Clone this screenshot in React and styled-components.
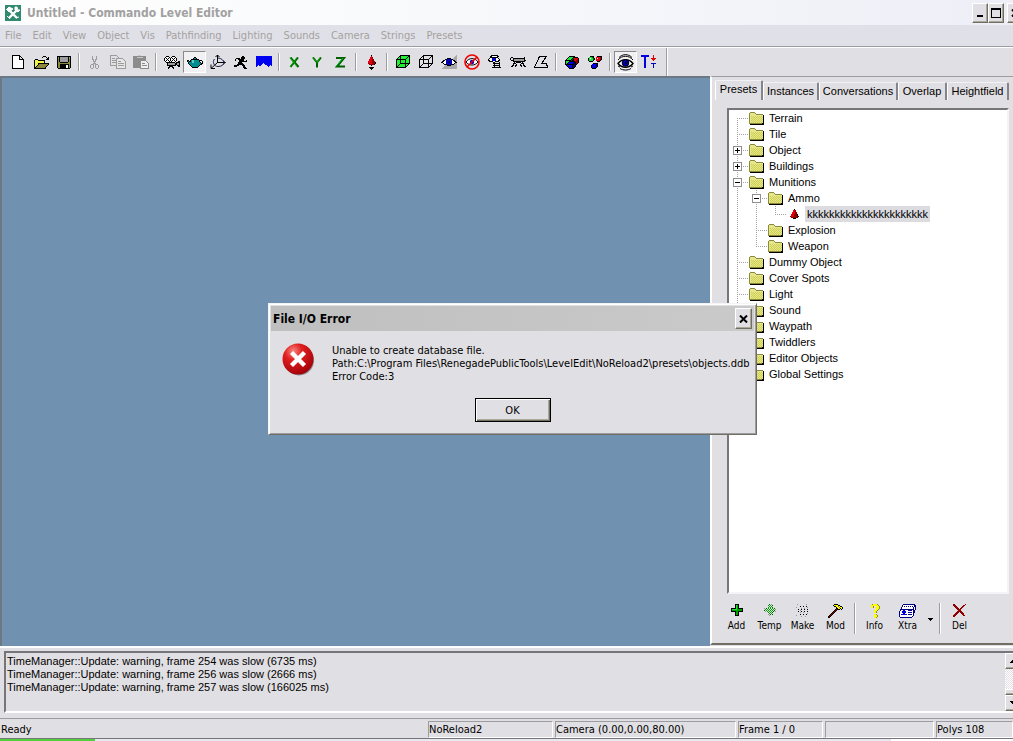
import React, { useState } from 'react';
import styled, { createGlobalStyle, css } from 'styled-components';

const GlobalStyle = createGlobalStyle`
    * { box-sizing : border-box; }
    body {
        margin : 0;
        background : #e0dfe3;
        overflow : hidden;
    }
    button {
        margin : 0;
        padding : 0;
        border : 0;
        background : none;
        color : inherit;
        font : inherit;
    }
    ul { list-style : none; margin : 0; padding : 0; }
    svg { display : block; flex : none; }
`

const ui = css`
    font-family : "DejaVu Sans Condensed", "DejaVu Sans", sans-serif;
    font-size : 11px;
`
const sans = css`
    font-family : "Liberation Sans", sans-serif;
    font-size : 11px;
`
const raised = css`
    border : 1px solid;
    border-color : #fff #716f64 #716f64 #fff;
    box-shadow : inset -1px -1px 0 #aca899;
`

const Window = styled.div`
    ${ui}
    display : flex;
    flex-direction : column;
    height : 100vh;
    color : #000;
    overflow : hidden;
`
const TitleBar = styled.header`
    display : flex;
    align-items : center;
    flex : none;
    height : 25px;
    padding-left : 5px;
    gap : 6px;
    overflow : hidden;
    background : linear-gradient(to right, #fefefe, #f8f9fb 45%, #eeeef7);
    h1 {
        flex : 1;
        margin : 0;
        font-size : 12px;
        font-weight : bold;
        color : #a2a1a1;
        white-space : nowrap;
    }
`
const Controls = styled.div`
    display : flex;
    flex : none;
    margin-right : -10px;
    button {
        ${raised}
        display : grid;
        place-items : center;
        width : 16px;
        height : 20px;
        background : #e0dfe3;
    }
    button:last-child { margin-left : 3px; }
`
const MenuBar = styled.nav`
    display : flex;
    align-items : center;
    flex : none;
    height : 22px;
    background : #e0e0e9;
    border-bottom : 1px solid #9d9da1;
    color : #a5a29d;
    button {
        padding : 0 5px 0 6px;
    }
    button:first-child { padding-left : 5px; }
`
const Toolbar = styled.div`
    display : flex;
    align-items : center;
    flex : none;
    height : 29px;
    padding-left : 6px;
    border-top : 1px solid #fff;
`
const ToolButton = styled.button`
    display : grid;
    place-items : center;
    width : 23px;
    height : 22px;
    ${p => p.$pressed && css`
        border : 1px solid;
        border-color : #8a8a8a #fff #fff #8a8a8a;
        background : #f1f1f3;
    `}
`
const Divider = styled.span`
    width : 2px;
    height : ${p => p.$tall ? '28px' : '18px'};
    margin : 0 3px 0 ${p => p.$tall ? '6px' : '3px'};
    border-left : 1px solid #9d9da1;
    border-right : 1px solid #fff;
`
const Workspace = styled.main`
    display : flex;
    flex : 1;
    min-height : 0;
`
const Viewport = styled.section`
    flex : 1;
    background : #7092b0;
    border : solid #6c7884;
    border-width : 2px 0 0 2px;
`
const Dock = styled.aside`
    ${sans}
    display : flex;
    flex-direction : column;
    width : 303px;
    margin-bottom : 1px;
    border-left : 2px solid #fff;
    border-top : 1px solid #9d9da1;
    padding : 3px 0 0 3px;
    border-bottom : 2px solid #716f64;
`
const Tabs = styled.div`
    display : flex;
    height : 20px;
    align-items : flex-end;
    padding-right : 4px;
`
const Tab = styled.button`
    flex : 0 0 ${p => p.$w}px;
    height : ${p => p.$active ? '20px' : '18px'};
    padding-bottom : ${p => p.$active ? '3px' : '1px'};
    border-top : 1px solid #f2f2f4;
    border-left : 1px solid #fff;
    border-right : 2px solid #85848a;
    border-radius : 2px 2px 0 0;
    white-space : nowrap;
`
const Tree = styled.ul`
    flex : 1;
    min-height : 0;
    margin : 8px 4px 0 12px;
    background : #fff;
    border : 2px solid;
    border-color : #77757a #f4f4f6 #f4f4f6 #77757a;
    overflow : hidden;
`
const Row = styled.div`
    display : flex;
    align-items : center;
    height : 16px;
`
const line = 'repeating-linear-gradient(#a5a5a5 0 1px, transparent 1px 2px)';
const dash = 'repeating-linear-gradient(to right, #a5a5a5 0 1px, transparent 1px 2px)';
const Guide = styled.span`
    display : flex;
    align-items : center;
    flex : none;
    width : 19px;
    height : 16px;
    padding-left : 4px;
    background-repeat : no-repeat;
    ${p => p.$kind === 'through' && css`
        background-image : ${line};
        background-size : 1px 16px;
        background-position : 8px 0;
    `}
    ${p => ['first', 'mid', 'last'].includes(p.$kind) && css`
        background-image : ${line}, ${dash};
        background-size : 1px ${p.$kind === 'mid' ? 16 : 8}px, 11px 1px;
        background-position : 8px ${p.$kind === 'first' ? 8 : 0}px, 8px 8px;
    `}
`
const Expander = styled.button`
    display : grid;
    place-items : center;
    width : 9px;
    height : 9px;
    background : #fff;
    border : 1px solid #8f8f8f;
`
const Label = styled.span`
    margin-left : 2px;
    padding : 0 2px;
    line-height : 16px;
    white-space : nowrap;
    background : ${p => p.$selected ? '#dcdce0' : 'none'};
`
const PresetBar = styled.div`
    ${ui}
    font-size : 10px;
    display : flex;
    align-items : center;
    flex : none;
    height : 49px;
    padding : 0 0 1px 5px;
`
const PresetButton = styled.button`
    display : flex;
    flex-direction : column;
    align-items : center;
    width : 33px;
    height : 28px;
    line-height : 12px;
    justify-content : space-between;
`
const DropButton = styled.button`
    display : grid;
    place-items : center;
    width : 13px;
    height : 30px;
    padding-top : 2px;
`
const PresetDivider = styled(Divider)`
    height : 31px;
    margin : 0 2px;
`
const Output = styled.section`
    display : flex;
    flex : none;
    height : 72px;
    padding : 3px 0 5px 4px;
    border-top : 2px solid #fff;
`
const Log = styled.textarea`
    ${sans}
    flex : 1;
    min-width : 0;
    margin : 0;
    padding : 2px 1px;
    border : 2px solid;
    border-color : #77757a #e0dfe3 #fff #77757a;
    border-right : 0;
    outline : 0;
    resize : none;
    overflow : hidden;
    background : #e0dfe3;
    color : #000;
    line-height : 13px;
    white-space : pre;
`
const ScrollBar = styled.div`
    display : flex;
    flex-direction : column;
    justify-content : space-between;
    width : 8px;
    overflow : hidden;
    border-top : 2px solid #77757a;
    border-bottom : 2px solid #fff;
    background : repeating-conic-gradient(#fff 0 25%, #e0dfe3 0 50%) 0 0 / 2px 2px;
    button {
        ${raised}
        display : grid;
        place-items : center;
        width : 16px;
        height : 16px;
        background : #e0dfe3;
    }
    button:nth-child(2) { height : 6px; margin-top : auto; }
`
const StatusBar = styled.footer`
    display : flex;
    align-items : center;
    flex : none;
    height : 20px;
    padding-top : 1px;
    gap : 2px;
    background : #e0dfe3;
    border-top : 1px solid #9d9da1;
`
const Pane = styled.span`
    flex : ${p => p.$w ? `0 0 ${p.$w}px` : '1'};
    height : 17px;
    line-height : 15px;
    white-space : nowrap;
    overflow : hidden;
    border : 1px solid transparent;
    ${p => p.$w && css`
        border-color : #9d9da1 #fff #fff #9d9da1;
    `}
`
const Overlay = styled.div`
    position : fixed;
    inset : 0;
    display : flex;
    align-items : center;
    justify-content : center;
    padding : 0 0 3px 12px;
`
const Dialog = styled.section`
    ${ui}
    width : 489px;
    background : #e0dfe3;
    border : 1px solid;
    border-color : #f4f4f6 #716f64 #716f64 #f4f4f6;
    box-shadow : inset 1px 1px 0 #fff, inset -1px -1px 0 #9d9da1;
    padding : 2px;
`
const DialogTitle = styled.div`
    display : flex;
    align-items : center;
    justify-content : space-between;
    height : 25px;
    padding : 0 2px;
    background : linear-gradient(to right, #bfbfbf, #cacaca);
    h2 {
        margin : 0;
        font-size : 12px;
        font-weight : bold;
    }
    button {
        ${raised}
        display : grid;
        place-items : center;
        width : 17px;
        height : 21px;
        background : #e0dfe3;
    }
`
const DialogBody = styled.div`
    display : flex;
    gap : 18px;
    padding : 12px 8px 0 11px;
    p {
        margin : 0;
        padding-top : 1px;
        line-height : 13px;
        white-space : pre;
    }
`
const DialogActions = styled.div`
    display : flex;
    justify-content : center;
    padding : 15px 0 10px;
    button {
        width : 76px;
        height : 24px;
        border : 1px solid #000;
        box-shadow : inset 1px 1px 0 #fff, inset -1px -1px 0 #716f64, inset -2px -2px 0 #aca899;
    }
`
const Taskbar = styled.div`
    display : flex;
    flex : none;
    height : 3px;
    background : linear-gradient(to right, #e8e8f0 88%, #fff 88%);
    border-top : 1px solid #77757a;
    span {
        width : 95px;
        background : #52cf3c;
    }
`

const Svg = ({ w = 16, h = 16, children, ...rest }) => (
    <svg width={w} height={h} viewBox={`0 0 ${w} ${h}`} fill="none" stroke="#000" shapeRendering="crispEdges" aria-hidden="true" {...rest}>{children}</svg>
)

// Small bitmaps: one character for each pixel, "." is empty
const colors = {
    k: '#000', w: '#fff', y: '#ffff00', o: '#84824a', d: '#8c8a3a', g: '#00a000', G: '#20e040', D: '#006000',
    r: '#e00010', R: '#900000', b: '#0000e0', n: '#000080', s: '#9c9c9c', t: '#008c8c', c: '#5cd0d0', f: '#e6e68c', e: '#cfcf52'
};
const Bitmap = ({ rows }) => (
    <Svg w={rows[0].length} h={rows.length} stroke="none">
        {rows.map((row, y) => [...row].map((c, x) => c !== '.' &&
            <rect key={`${x}-${y}`} x={x} y={y} width="1" height="1" fill={colors[c]} />
        ))}
    </Svg>
)

const bitmaps = {
    open: [
        '..........kkk...',
        '.........k...k.k',
        '..............kk',
        '..kkk........kkk',
        '.kfyfkkkkkkk....',
        '.kyfyfyfyfyk....',
        '.kfyfyfyfyfk....',
        '.kyfykkkkkkkkkkk',
        '.kfyfkdddddddddk',
        '.kyfkdddddddddk.',
        '.kfkdddddddddk..',
        '.kkdddddddddk...',
        '.kkkkkkkkkkkk...',
    ],
    save: [
        'kkkkkkkkkkkkkk',
        'kdkssssssssksk',
        'kdkssssssssksk',
        'kdksssssssskdk',
        'kdksssssssskdk',
        'kdksssssssskdk',
        'kddkkkkkkkkddk',
        'kddddddddddddk',
        'kddkkkkkkkkkdk',
        'kddkkkkkkwwkdk',
        'kddkkkkkkwwkdk',
        'kddkkkkkkwwkdk',
        '.kkkkkkkkkkkk.',
    ],
    cut: [
        '...s...s...',
        '...s...s...',
        '...s...s...',
        '...ss.ss...',
        '....s.s....',
        '....sss....',
        '.....s.....',
        '....sss....',
        '..sss.sss..',
        '.s..s.s..s.',
        '.s..s.s..s.',
        '.s..s.s..s.',
        '..ss...ss..',
    ],
    camera: [
        '..kkk...kkk.....',
        '.kwwwk.kwwwk....',
        'kwkwkwkwkwkwk...',
        'kwwkwwkwwkwwk...',
        'kwkwkwkwkwkwk...',
        '.kwwwk.kwwwk..kk',
        '..kkkkkkkkk.kkkk',
        '...kssssssskkssk',
        '...kssssssskkssk',
        '...kkkkkkkkk.kkk',
        '.....kkkk.....kk',
        '....kk..kk......',
        '....k....k......',
    ],
    teapot: [
        '.......kk.......',
        '......kttk......',
        '....kkkkkkkk....',
        'kk.ktcctttttkkk.',
        'ktkktcctttttk..k',
        '.ktttccttttttk.k',
        '.kttttttttttttkk',
        '..kttttttttttkk.',
        '...kttttttttk...',
        '....kttttttk....',
        '.....kkkkkk.....',
    ],
    runner: [
        '........kk...',
        '.......kkkk..',
        '..kkkk.kkkk..',
        '.k..kkkkkk...',
        '.k...kkkkk..k',
        '.....kkkkkkkk',
        '....kkkk.....',
        '....kkkkk....',
        '...kkkkkkk...',
        'kkkkk...kkk..',
        'kkk......kk..',
        '.........kkk.',
        '..........kkk',
    ],
    spindle: [
        '....k....',
        '....r....',
        '...rrR...',
        '...rrR...',
        '..rrrRR..',
        '..rrrRR..',
        '.rrrrRRR.',
        '.rrrrRRRk',
        '.RrrrRRRk',
        '..RRRRRk.',
        '....k....',
        '.........',
        '..kkkkk..',
        '...kkk...',
        '....k....',
    ],
    walker: [
        '.kk...........k.',
        'k..kkkkkkkkkkkk.',
        'k..kssssssssssk.',
        '.kkksssssssssskk',
        '...kkkkkkkkkkkk.',
        '....k.kkkkk.k...',
        '...kkk.....kkk..',
        '...k..k...k..k..',
        '..kk.kk...kk.kk.',
        '.kk..k.....k..kk',
    ],
    solids: [
        '....kkkkkk....',
        '...kGGGGkkkkk.',
        '..kGGGGkDrrrrk',
        '.kGGGGkDkrrrRk',
        'kkkkkkDkkrrRRk',
        'kGGGkkkkkkRRRk',
        'kGGkbbbbbkkRRk',
        'kGkbbbbbknkRk.',
        'kkkkkkkkknkk..',
        '.kbbbbbknnk...',
        '..kbbbbknnk...',
        '...kbbbknk....',
        '....kkkkk.....',
    ],
    group: [
        '..kkkk...kkkkk',
        '.GGGDk..rrrrRk',
        'kGwGGDk.rwrrRk',
        'kGGGGDk.rrrrRk',
        'kGGGGk..rrrRk.',
        '.kkkk....kkk..',
        '..............',
        '.....kkkkk....',
        '....bbbbnk....',
        '...kbbbbnk....',
        '...kbbbbnk....',
        '...kbbbnk.....',
        '....kkkk......',
    ],
    folder: [
        '.ddddd.........',
        'dfffffd........',
        'dffffffddddddd.',
        'dfffffffffffffk',
        'dfefefefefefefk',
        'dffefefefefefek',
        'dfefefefefefefk',
        'dffefefefefefek',
        'dfefefefefefefk',
        'dffefefefefefek',
        'dfefefefefefefk',
        'dddddddddddddkk',
        '.kkkkkkkkkkkkkk',
    ],
    drop: [
        '....k....',
        '...rrR...',
        '...rrR...',
        '..rrrRR..',
        '..rrrRR..',
        '.rrrRRRk.',
        '.rrrRRRk.',
        'RrrRRRRRk',
        '.RRRRRRk.',
        '...kkk...',
    ],
    add: [
        '....kkkk....',
        '....kGgk....',
        '....kGgk....',
        '....kGgk....',
        'kkkkkGgkkkkk',
        'kGGGGGgggggk',
        'kggggggggggk',
        'kkkkkggkkkkk',
        '....kggk....',
        '....kggk....',
        '....kggk....',
        '....kkkk....',
    ],
    temp: [
        '.....D.s....',
        '....g.g.D...',
        '.....g.g....',
        '....g.g.D...',
        's.D.g.g.g.D.',
        '.g.g.g.g.g.s',
        'D.g.g.g.g.D.',
        '.s.g.g.g.D.s',
        '....g.g.D...',
        '.....g.g....',
        '....s.D.D...',
        '.....s......',
    ],
    make: [
        '.s........s..',
        '.............',
        '....k..k..k..',
        's..........s.',
        '.....s..s....',
        '..k..k..k..k.',
        '....s........',
        '..k..k..k..k.',
        '....s..s.....',
        '...........s.',
        '....k..k..k..',
        's............',
        '.....s...s...',
    ],
    mod: [
        '......kkkk.....',
        '.....kyyyykk...',
        '......kkyydykk.',
        '........kyydyyk',
        '........kkyykyk',
        '.......kRkkk.k.',
        '......kRk......',
        '.....kRk.......',
        '....kRk........',
        '...kRk.........',
        '..kRk..........',
        '.kRk...........',
        'kRk............',
        'kk.............',
    ],
    info: [
        '..dyyyyd..',
        '.yyyyyyyd.',
        '.yyd..yyyd',
        '.yyd..yyyd',
        '......yyyd',
        '.....yyyd.',
        '....yyyd..',
        '....yyd...',
        '....yyd...',
        '..........',
        '....yyd...',
        '....yyyd..',
        '....yyyd..',
        '....yyd...',
    ],
    xtra: [
        '....nnnnnnnnnnnn.',
        '...nwwwwwwwwwwwnn',
        '...nwnwnwnwnwnwnn',
        '..nwwwwwwwwwwwnwn',
        '..nwwwwwwwwwwwnwn',
        '.nnnnnnnnnnnnnnwn',
        '.nwwbbwwwnnnnwnn.',
        'nwwbbbbwwwwwwwnn.',
        'nwwbbbbwwnnnnwnn.',
        'nwwwbbwwwwwwwwn..',
        'nwbbbbbbwnnnnwn..',
        'nwwwwwwwwwwwwwn..',
        'nwwwwwwwwwwwwn...',
        '.nnnnnnnnnnnn....',
    ],
    del: [
        'RR..........R',
        'RRR.......RR.',
        '.RRR.....RR..',
        '..RRR...RR...',
        '...RRR.RR....',
        '....RRRR.....',
        '.....RRR.....',
        '....RRRRR....',
        '...RRR.RRR...',
        '..RRR...RRR..',
        '.RRR.....RR..',
        'RRR.......RR.',
        'RR...........',
    ],
};

const icons = {
    new: <Svg w={12} h={14}><path d="M.5.5h7l4 4v9H.5zM7.5.5v4h4" fill="#fff" /></Svg>,
    copy: <Svg stroke="#9c9c9c"><path d="M.5 1.5h6l3 3v7h-9zM2 4.5h3M2 6.5h5M2 8.5h5" /><path d="M6.5 4.5h6l3 3v7h-9z" fill="#e6e6e9" /><path d="M8 7.5h3M8 9.5h6M8 11.5h6" /></Svg>,
    paste: <Svg stroke="#8c8c8c"><path d="M.5 2.5h12v11H.5z" fill="#8c8c8c" /><path d="M3.5 3.5h6M5 1.5h3" stroke="#c8c8c8" /><path d="M7.5 6.5h5l3 3v5h-8z" fill="#eee" /><path d="M9 9.5h3M9 11.5h5" /></Svg>,
    axes: <Svg shapeRendering="auto"><path d="M7.5 9V1M5.5 3l2-2 2 2M7.5 8.5h8M13 6.5l2 2-2 2M7.5 8.5l-6.5 6M1 10.5v4h4" /><path d="M4.5 5C2 8 4 12.5 8 12.5s6-2 6-4S11 4 8 4" stroke="#222250" /></Svg>,
    terrain: <Svg stroke="none"><path d="M0 2h16v11l-2-2-2 2-2-2H9l-2-2-3 3-2-1-2 2z" fill="#0000f0" /></Svg>,
    x: <Svg w={11} h={11} shapeRendering="auto"><path d="M1.5.5l8 9.5M9 .5L1.5 10" stroke="#006000" strokeWidth="2" /><path d="M1 .5l7 9M8 .5L1 10" stroke="#00b000" /></Svg>,
    y: <Svg w={11} h={11} shapeRendering="auto"><path d="M1 .5l4 5 4-5M5 5v5.5" stroke="#006000" strokeWidth="2" /><path d="M1 .5l4 5 3-5" stroke="#00b000" /></Svg>,
    z: <Svg w={11} h={11} shapeRendering="auto"><path d="M1 1h8L2 9.5h8" stroke="#006000" strokeWidth="2" /><path d="M8 1L1 9.5" stroke="#00c020" /></Svg>,
    solid: <Svg><path d="M1.5 5.5l4-4h9v8l-4 4h-9z" fill="#20f030" /><path d="M1.5 5.5h9v8M10.5 5.5l4-4M5.5 1.5v8h9M5.5 9.5l-4 4" /></Svg>,
    wire: <Svg><path d="M1.5 5.5l4-4h9v8l-4 4h-9zM1.5 5.5h9v8M10.5 5.5l4-4M5.5 1.5v8h9M5.5 9.5l-4 4" /></Svg>,
    visEye: <Svg><path d="M16 1v14H0z" fill="#a8a8a8" stroke="none" /><path d="M1 8.5c4-5 10-5 14 0-4 4-10 4-14 0z" fill="#fff" /><circle cx="8" cy="8" r="2.5" fill="#0000c0" stroke="#0000c0" /><path d="M8 7h1v2H8z" stroke="none" fill="#000" /></Svg>,
    noEye: <Svg shapeRendering="auto"><path d="M2 8c3-4.5 9-4.5 12 0-3 4-9 4-12 0z" fill="#fff" /><circle cx="8" cy="8" r="2.2" fill="#0000c0" stroke="none" /><g stroke="#f00000" strokeWidth="1.6"><circle cx="8" cy="8" r="7" /><path d="M13 3L3 13" /></g></Svg>,
    ladder: <Svg><path d="M1 6c3-4 9-4 12 0-3 3-9 3-12 0zM3 3c3-2.5 6-2.5 9 0" fill="#fff" /><circle cx="7" cy="5.5" r="2" fill="#0000c0" stroke="none" /><path d="M6 9.5h7M6 11.5h7M5 13.5h9M7.5 8v6M12.5 8v6" /></Svg>,
    outline: <Svg><path d="M5.5 2.5h8l-5 7h5l1 4H1.5l5-11z" /></Svg>,
    bigEye: <Svg w={17} h={17} shapeRendering="auto"><path d="M1 6C5 1 12 1 16 6M2 3.5C6-.3 11-.3 15 3.5" /><path d="M1 9.5c4-5 11-5 15 0-4 5-11 5-15 0z" fill="#fff" strokeWidth="1.4" /><circle cx="8.5" cy="9" r="3.3" fill="#0000c0" /><path d="M8 8h2v2H8z" stroke="none" fill="#000" /><path d="M3 14.5c3 2 8 2 11 0M1 12l2 1M16 12l-2 1" /></Svg>,
    typeIcon: <Svg><path d="M0 1h8v2H5v11H3V3H0z" fill="#0000e0" stroke="none" /><path d="M12 1h1v3h2l-2.5 3L10 4h2z" fill="#e00000" stroke="none" /><path d="M10 9h5v1h-2v4h-1v-4h-2z" fill="#0000c0" stroke="none" /></Svg>,
};
const Icon = ({ name }) => icons[name] || <Bitmap rows={bitmaps[name]} />

const toolGroups = [
    [['new', 'New'], ['open', 'Open'], ['save', 'Save']],
    [['cut', 'Cut'], ['copy', 'Copy'], ['paste', 'Paste']],
    [['camera', 'Camera mode'], ['teapot', 'Object mode', true], ['axes', 'Orbit mode'], ['runner', 'Walk through'], ['terrain', 'Heightfield']],
    [['x', 'Restrict X'], ['y', 'Restrict Y'], ['z', 'Restrict Z']],
    [['spindle', 'Drop to ground']],
    [['solid', 'Solid'], ['wire', 'Wireframe'], ['visEye', 'Vis sector'], ['noEye', 'Vis disable'], ['ladder', 'Vis points'], ['walker', 'Vis window'], ['outline', 'Manual vis']],
    [['solids', 'Group'], ['group', 'Ungroup']],
    [['bigEye', 'Display', true], ['typeIcon', 'Snap to terrain']],
];
const menus = ['File', 'Edit', 'View', 'Object', 'Vis', 'Pathfinding', 'Lighting', 'Sounds', 'Camera', 'Strings', 'Presets'];
const tabs = [['Presets', 48], ['Instances', 56], ['Conversations', 79], ['Overlap', 49], ['Heightfield', 62]];

// guides: the branch cells to the left of the item, outermost first
const nodes = [
    { label: 'Terrain', guides: ['first'] },
    { label: 'Tile', guides: ['mid'] },
    { label: 'Object', guides: ['mid'], sign: '+' },
    { label: 'Buildings', guides: ['mid'], sign: '+' },
    { label: 'Munitions', guides: ['mid'], sign: '-' },
    { label: 'Ammo', guides: ['through', 'mid'], sign: '-' },
    { label: 'kkkkkkkkkkkkkkkkkkkkkk', guides: ['through', 'through', 'last'], icon: 'drop', selected: true },
    { label: 'Explosion', guides: ['through', 'mid'] },
    { label: 'Weapon', guides: ['through', 'last'] },
    { label: 'Dummy Object', guides: ['mid'] },
    { label: 'Cover Spots', guides: ['mid'] },
    { label: 'Light', guides: ['mid'] },
    { label: 'Sound', guides: ['mid'] },
    { label: 'Waypath', guides: ['mid'] },
    { label: 'Twiddlers', guides: ['mid'] },
    { label: 'Editor Objects', guides: ['mid'] },
    { label: 'Global Settings', guides: ['last'] },
];
const IconCell = styled.span`
    display : grid;
    place-items : center;
    width : 17px;
    flex : none;
`
const TreeNode = ({ node }) => (
    <li>
        <Row>
            {node.guides.map((kind, i) => (
                <Guide key={i} $kind={kind}>
                    {node.sign && i === node.guides.length - 1 &&
                        <Expander aria-label={`Toggle ${node.label}`}>
                            <Svg w={7} h={7}><path d={node.sign === '+' ? 'M1 3.5h5M3.5 1v5' : 'M1 3.5h5'} /></Svg>
                        </Expander>}
                </Guide>
            ))}
            <IconCell><Icon name={node.icon || 'folder'} /></IconCell>
            <Label $selected={node.selected}>{node.label}</Label>
        </Row>
    </li>
)

const log = `TimeManager::Update: warning, frame 254 was slow (6735 ms)
TimeManager::Update: warning, frame 256 was slow (2666 ms)
TimeManager::Update: warning, frame 257 was slow (166025 ms)`;

const CloseGlyph = () => <Svg w={9} h={8} shapeRendering="auto"><path d="M1 .5l7 7M8 .5l-7 7" strokeWidth="2" /></Svg>

const PresetTool = ({ icon, label }) => (
    <PresetButton>
        <Icon name={icon} />
        {label}
    </PresetButton>
)

const ErrorDialog = ({ onClose }) => (
    <Overlay>
        <Dialog role="alertdialog" aria-labelledby="error-title">
            <DialogTitle>
                <h2 id="error-title">File I/O Error</h2>
                <button aria-label="Close" onClick={onClose}><CloseGlyph /></button>
            </DialogTitle>
            <DialogBody>
                <Svg w={32} h={33} shapeRendering="auto" stroke="none">
                    <defs>
                        <radialGradient id="ball" cx="35%" cy="25%" r="80%">
                            <stop offset="0" stopColor="#f58a80" />
                            <stop offset=".35" stopColor="#e02020" />
                            <stop offset="1" stopColor="#a00008" />
                        </radialGradient>
                    </defs>
                    <circle cx="17" cy="17.5" r="15" fill="#8a8a90" />
                    <circle cx="16" cy="16" r="15.5" fill="url(#ball)" />
                    <path d="M9.5 9.5l13 13M22.5 9.5l-13 13" stroke="#fff" strokeWidth="4.4" />
                </Svg>
                <p>{'Unable to create database file.\nPath:C:\\Program Files\\RenegadePublicTools\\LevelEdit\\NoReload2\\presets\\objects.ddb\nError Code:3'}</p>
            </DialogBody>
            <DialogActions>
                <button onClick={onClose}>OK</button>
            </DialogActions>
        </Dialog>
    </Overlay>
)

const App = () => {
    const [error, setError] = useState(true);
    const [tab, setTab] = useState('Presets');
    return (
        <Window>
            <GlobalStyle />
            <TitleBar>
                <Svg shapeRendering="auto" stroke="none">
                    <path d="M0 0h16v16H0z" fill="#2f8a70" />
                    <path d="M4 5l8 8M12 5l-8 8" stroke="#fff" strokeWidth="2.4" />
                    <path d="M1.5 4.5L4 2l4 2-4 3zM10 2v3l3 2 2-2-2 0-1-3zM2 11l3 3M11 13l3-1" fill="#fff" stroke="#fff" />
                </Svg>
                <h1>Untitled - Commando Level Editor</h1>
                <Controls>
                    <button aria-label="Minimize"><Svg w={10} h={10}><path d="M2 8h6" strokeWidth="2" /></Svg></button>
                    <button aria-label="Maximize"><Svg w={10} h={10}><path d="M0 1h10" strokeWidth="2" /><path d="M.5 1v8.5h9V1" /></Svg></button>
                    <button aria-label="Close"><CloseGlyph /></button>
                </Controls>
            </TitleBar>
            <MenuBar>
                {menus.map(m => <button key={m}>{m}</button>)}
            </MenuBar>
            <Toolbar>
                {toolGroups.map((group, i) => (
                    <React.Fragment key={i}>
                        {i > 0 && <Divider />}
                        {group.map(([name, label, pressed]) => (
                            <ToolButton key={name} aria-label={label} $pressed={pressed}><Icon name={name} /></ToolButton>
                        ))}
                    </React.Fragment>
                ))}
                <Divider $tall />
            </Toolbar>
            <Workspace>
                <Viewport aria-label="Level view" />
                <Dock>
                    <Tabs role="tablist">
                        {tabs.map(([name, w]) => (
                            <Tab key={name} role="tab" $w={w} $active={tab === name} onClick={() => setTab(name)}>{name}</Tab>
                        ))}
                    </Tabs>
                    <Tree>
                        {nodes.map(n => <TreeNode key={n.label} node={n} />)}
                    </Tree>
                    <PresetBar>
                        <PresetTool icon="add" label="Add" />
                        <PresetTool icon="temp" label="Temp" />
                        <PresetTool icon="make" label="Make" />
                        <PresetTool icon="mod" label="Mod" />
                        <PresetDivider />
                        <PresetTool icon="info" label="Info" />
                        <PresetTool icon="xtra" label="Xtra" />
                        <DropButton aria-label="More"><Svg w={5} h={3} stroke="none"><path d="M0 0h5L2.5 3z" fill="#000" /></Svg></DropButton>
                        <PresetDivider />
                        <PresetTool icon="del" label="Del" />
                    </PresetBar>
                </Dock>
            </Workspace>
            <Output>
                <Log readOnly aria-label="Output" value={log} />
                <ScrollBar>
                    <button aria-label="Scroll up"><Svg w={7} h={4} stroke="none"><path d="M0 4h7L3.5 0z" fill="#000" /></Svg></button>
                    <button aria-label="Scroll position" />
                    <button aria-label="Scroll down"><Svg w={7} h={4} stroke="none"><path d="M0 0h7L3.5 4z" fill="#000" /></Svg></button>
                </ScrollBar>
            </Output>
            <StatusBar>
                <Pane>Ready</Pane>
                <Pane $w={125}>NoReload2</Pane>
                <Pane $w={181}>Camera (0.00,0.00,80.00)</Pane>
                <Pane $w={85}>Frame 1 / 0</Pane>
                <Pane $w={109} />
                <Pane $w={77}>Polys 108</Pane>
            </StatusBar>
            <Taskbar><span /></Taskbar>
            {error && <ErrorDialog onClose={() => setError(false)} />}
        </Window>
    )
}

export default App;
